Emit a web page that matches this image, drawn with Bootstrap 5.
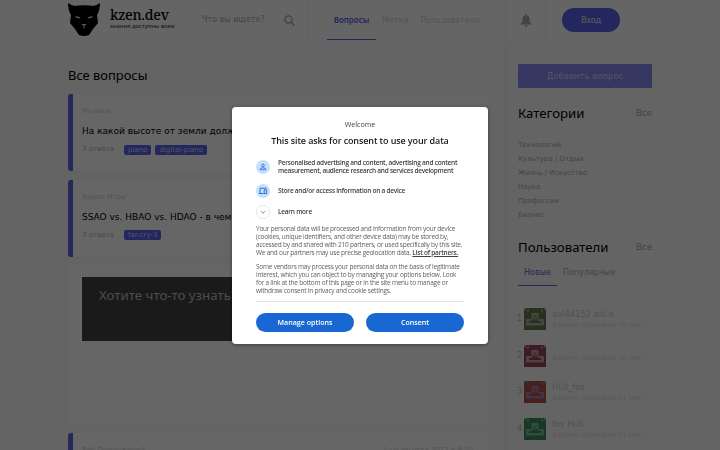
<!DOCTYPE html>
<html lang="ru">
  <head>
    <meta charset="UTF-8" />
    <meta name="viewport" content="width=device-width, initial-scale=1.0" />
    <title>kzen.dev - Все вопросы</title>
    <link href="https://cdn.jsdelivr.net/npm/bootstrap@5.3.3/dist/css/bootstrap.min.css" rel="stylesheet" />
    <style>
      body {
        font-family: "Noto Sans", sans-serif;
        font-size: 8px;
        line-height: 1;
        background-color: #fafafa;
        color: #000;
        width: 720px;
        height: 450px;
        overflow: hidden;
      }
      a { text-decoration: none; color: inherit; }
      .dejavu { font-family: "DejaVu Sans", sans-serif; }

      /* Header */
      .site-header {
        height: 41px;
        padding-left: 68px;
        background-color: #fdfdfd;
        border-bottom: 1px solid #f2f2f5;
        white-space: nowrap;
      }
      .brand { width: 118px; border-right: 1px solid #f5f5f8; }
      .brand-text { margin-left: 10px; padding-top: 7px; }
      .brand-name { font: 500 14.1px/16px "Noto Serif", "DejaVu Serif", serif; letter-spacing: -.3px; }
      .brand-sub { font-size: 5.9px; line-height: 7px; color: #333; }
      .search-box { width: 122px; padding: 0 12px 0 16px; color: #a6a6b2; border-right: 1px solid #f5f5f8; }
      .main-nav { width: 198px; padding-left: 19px; border-right: 1px solid #f0f0f4; color: #d0d0d5; }
      .main-nav a { height: 40px; line-height: 41px; }
      .main-nav .current { width: 49px; margin-right: 6px; text-align: center; color: #5c62df; font-family: "Noto Sans", sans-serif; font-weight: 600; border-bottom: 1px solid #5c62df; line-height: 39px; }
      .bell-box { width: 40px; color: #a9a9b9; border-right: 1px solid #f0f0f4; }
      .btn-login { width: 58px; height: 24px; margin-left: 16px; border-radius: 12px; background-color: #5a62e8; color: #d8d8ec; font-weight: 500; }

      /* Questions */
      .questions { width: 419px; height: 409px; margin-left: 68px; overflow: hidden; }
      .questions h1 { font-size: 12.9px; font-weight: 400; line-height: 20px; margin: 24px 0 9px; }
      .question { height: 77px; margin-bottom: 8.5px; padding: 13px 14px 0 9px; border-left: 5px solid #5c64e4; border-radius: 3px; background-color: #fff; box-shadow: 0 0 4px rgba(0, 0, 0, .035); white-space: nowrap; overflow: hidden; }
      .topic { font-size: 7px; line-height: 9px; color: #d0d0d5; }
      .question h2 { font: 9px/12px "DejaVu Sans", sans-serif; margin: 9px 0 7.5px; }
      .answers { width: 42px; font-size: 7px; color: #b5b5bd; }
      .tag { height: 10px; padding: 0 4px; margin-right: 4px; font-size: 7px; line-height: 10px; border-radius: 2px; background-color: #5a62e8; color: #d5d5f2; }
      .promo { height: 159.5px; margin-bottom: 8px; padding: 12px 14px; background-color: #fff; box-shadow: 0 0 4px rgba(0, 0, 0, .035); }
      .promo-title { height: 64px; padding: 9px 17px; background-color: #424242; color: #bdbdbd; font-size: 13.3px; line-height: 18px; white-space: nowrap; overflow: hidden; }

      /* Sidebar */
      .sidebar { width: 147px; height: 409px; margin-left: 18px; padding: 23px 0 0 12px; border-left: 1px solid #f1f1f4; overflow: hidden; }
      .btn-ask { height: 24px; border-radius: 1px; background-color: #858bf0; color: #d4d4f5; }
      .side-title { font-size: 13.2px; font-weight: 400; line-height: 20px; margin: 0; }
      .show-all { font-size: 9.7px; line-height: 20px; color: #ababb0; }
      .side-head { margin-top: 15px; }
      .categories { font-size: 7px; line-height: 14px; color: #a8a8b5; margin: 15px 0 15px; }
      .user-tabs { height: 17px; margin-top: 12px; line-height: 8px; color: #aaaab2; border-bottom: 1px solid #f6f6f8; }
      .user-tabs .current { width: 39px; margin-right: 6px; color: #6468df; border-bottom: 1px solid #5c62df; text-align: center; height: 17px; }
      .user-list { padding-top: 17px; }
      .user-row { height: 36.6px; padding-top: 5px; white-space: nowrap; border-bottom: 1px solid #f5f5f5; }
      .rank { width: 7px; margin-left: -1px; line-height: 22px; color: #bdbdc4; }
      .user-info { margin-left: 6px; }
      .user-name { height: 12px; font-size: 8.3px; line-height: 12px; color: #cacad0; }
      .joined { font-size: 6.9px; line-height: 10px; color: #dcdce0; }

      /* Consent dialog */
      .shade { background-color: rgba(0, 0, 0, .6); }
      .consent { width: 256px; height: 237px; margin-top: 106.5px; padding: 13.5px 24px 0; font-family: "Open Sans", sans-serif; border-radius: 4px; background-color: #fff; color: #3f4246; box-shadow: 0 1px 4px rgba(0, 0, 0, .4); white-space: nowrap; }
      .welcome { font-size: 7.1px; font-weight: 500; line-height: 8px; }
      .consent h3 { font-size: 9px; letter-spacing: -.11px; line-height: 12px; margin: 7px 0 12px; font-weight: 600; color: #17191c; }
      .purpose { height: 16px; font-size: 6.5px; letter-spacing: -.25px; line-height: 8px; font-weight: 600; gap: 8px; }
      .purpose svg { flex: none; }
      .purpose-more { margin: 5px 0 4.5px; }
      .legal { font-size: 6.5px; letter-spacing: -.23px; line-height: 8px; color: #5f6063; margin: 0 0 6px; }
      .legal a { color: #3f4246; font-weight: 600; text-decoration: underline; }
      .consent-actions { margin-top: 6px; padding-top: 11.5px; gap: 12px; border-top: 1px solid #dfe1e5; }
      .btn-consent { flex: 1; height: 19px; border-radius: 10px; background-color: #1967d2; color: #fff; font-size: 7.1px; font-weight: 600; }
      .btn { --bs-btn-padding-x: 0; --bs-btn-padding-y: 0; --bs-btn-border-width: 0; --bs-btn-line-height: 1; }
      .btn-login, .btn-ask { font-size: 8.5px; }
    </style>
  </head>
  <body>
    <svg class="d-none">
      <symbol id="avatar" viewBox="0 0 22 22">
        <path d="M0 0h2v2H0zM20 0h2v2h-2zM3 1.500h2v2H3zM17 1.500h2v2h-2zM7.500 5h7v6H20v6.500H2V11h5.500zM9.500 7.500V11H8v2H5v2h12v-2h-3v-2h-1.500V7.500z" fill-rule="evenodd" />
        <path d="M9.500 7.500h3V12h-3z" opacity=".55" />
      </symbol>
    </svg>

    <header class="site-header d-flex">
      <a class="brand d-flex" href="#">
        <svg width="32" height="36" viewBox="0 0 32 36">
          <path d="M0 3Q5 7 10 5.500Q16 5 22 5.500Q27 7 32 3Q32 10 29 15L30 23L25 29L21 35Q16 37 11 35L7 29L2 23L3 15Q0 10 0 3Z" fill="#000" />
          <path d="M7 16l4.500 1 1 1.500q-4.500 0-5.500-2.500zM25 16l-4.500 1-1 1.500q4.500 0 5.500-2.500zM13.500 24h5l-2 2v2.500h-1V26z" fill="#dedede" />
        </svg>
        <span class="brand-text">
          <span class="brand-name d-block">kzen.dev</span>
          <span class="brand-sub d-block">знания доступны всем</span>
        </span>
      </a>
      <div class="search-box d-flex align-items-center justify-content-between dejavu">
        <span>Что вы ищете?</span>
        <svg width="11" height="11" viewBox="0 0 11 11" fill="none" stroke="#a0a0a0" stroke-width="1.3"><circle cx="4.5" cy="4.5" r="3.6" /><path d="M7.2 7.2l3.3 3.3" /></svg>
      </div>
      <nav class="main-nav d-flex dejavu">
        <a class="current" href="#">Вопросы</a>
        <a href="#">Метки</a>
        <a class="ms-2 ps-1" href="#">Пользователи</a>
      </nav>
      <div class="bell-box d-flex align-items-center justify-content-center">
        <svg width="12" height="13" viewBox="0 0 12 13" fill="currentColor"><path d="M5.3 0h1.4v1.2Q9.5 2 9.5 5v2.7L11.5 10v.6H.5V10l2-2.3V5q0-3 2.8-3.8zM4.5 11.3h3Q7.3 13 6 13t-1.5-1.7z" /></svg>
      </div>
      <a class="btn btn-login d-flex align-items-center justify-content-center align-self-center" href="#">Вход</a>
    </header>

    <main class="d-flex">
      <section class="questions">
        <h1>Все вопросы</h1>
        <article class="question dejavu">
          <div class="topic">Музыка</div>
          <h2>На какой высоте от земли должно быть пианино?</h2>
          <div class="d-flex align-items-center"><span class="answers">3 ответа</span><span class="tag">piano</span><span class="tag">digital-piano</span></div>
        </article>
        <article class="question dejavu">
          <div class="topic">Видео Игры</div>
          <h2>SSAO vs. HBAO vs. HDAO - в чем разница?</h2>
          <div class="d-flex align-items-center"><span class="answers">3 ответа</span><span class="tag">far-cry-3</span></div>
        </article>
        <div class="promo">
          <div class="promo-title">Хотите что-то узнать?</div>
        </div>
        <article class="question dejavu">
          <div class="topic d-flex justify-content-between"><span>Веб Приложений</span><span>1-го августа 2012 в 9:40</span></div>
        </article>
      </section>

      <aside class="sidebar">
        <a class="btn btn-ask d-flex align-items-center justify-content-center dejavu" href="#">Добавить вопрос</a>
        <div class="side-head d-flex justify-content-between">
          <h2 class="side-title">Категории</h2><a class="show-all" href="#">Все</a>
        </div>
        <ul class="categories list-unstyled dejavu">
          <li>Технологий</li>
          <li>Культура / Отдых</li>
          <li>Жизнь / Искусство</li>
          <li>Наука</li>
          <li>Профессии</li>
          <li>Бизнес</li>
        </ul>
        <div class="d-flex justify-content-between">
          <h2 class="side-title">Пользователи</h2><a class="show-all" href="#">Все</a>
        </div>
        <div class="user-tabs d-flex dejavu">
          <a class="current" href="#">Новые</a><a href="#">Популярные</a>
        </div>
        <div class="user-list dejavu">
          <div class="user-row d-flex">
            <span class="rank">1</span>
            <svg width="22" height="22" fill="#a5b49a"><rect width="22" height="22" fill="#6a7550" /><use href="#avatar" /></svg>
            <div class="user-info"><div class="user-name">aol44152 aol o</div><div class="joined">Зарегистрирован 10 мес.</div></div>
          </div>
          <div class="user-row d-flex">
            <span class="rank">2</span>
            <svg width="22" height="22" fill="#c4a0a8"><rect width="22" height="22" fill="#984558" /><use href="#avatar" /></svg>
            <div class="user-info pt-1 mt-1"><div class="joined">Зарегистрирован 10 мес.</div></div>
          </div>
          <div class="user-row d-flex">
            <span class="rank">3</span>
            <svg width="22" height="22" fill="#a480b0"><rect width="22" height="22" fill="#ae5048" /><use href="#avatar" /></svg>
            <div class="user-info"><div class="user-name">Hull_fox</div><div class="joined">Зарегистрирован 11 мес.</div></div>
          </div>
          <div class="user-row d-flex">
            <span class="rank">4</span>
            <svg width="22" height="22" fill="#80c098"><rect width="22" height="22" fill="#3c8c5a" /><use href="#avatar" /></svg>
            <div class="user-info"><div class="user-name">fox Hull</div><div class="joined">Зарегистрирован 11 мес.</div></div>
          </div>
        </div>
      </aside>
    </main>

    <div class="shade position-fixed top-0 start-0 w-100 h-100 d-flex justify-content-center align-items-start">
      <div class="consent" role="dialog">
        <div class="welcome text-center">Welcome</div>
        <h3 class="text-center">This site asks for consent to use your data</h3>
        <div class="purpose d-flex align-items-center">
          <svg width="14" height="14" viewBox="0 0 14 14"><circle cx="7" cy="7" r="7" fill="#c5dffc" /><g fill="none" stroke="#1967d2" stroke-width=".8"><circle cx="7" cy="5.4" r="1.3" /><path d="M4.1 9.7V9Q4.3 7.9 7 7.8Q9.7 7.9 9.9 9v.7z" /></g></svg>
          <span>Personalised advertising and content, advertising and content<br />measurement, audience research and services development</span>
        </div>
        <div class="purpose d-flex align-items-center mt-2">
          <svg width="14" height="14" viewBox="0 0 14 14"><circle cx="7" cy="7" r="7" fill="#c5dffc" /><g fill="none" stroke="#1967d2" stroke-width=".9"><path d="M10.5 4.2H4.1v5M3 9.500h4.500M8.200 5.800h2.500v3.800H8.200z" /></g></svg>
          <span>Store and/or access information on a device</span>
        </div>
        <div class="purpose purpose-more d-flex align-items-center">
          <svg width="14" height="14" viewBox="0 0 14 14" fill="none"><circle cx="7" cy="7" r="6.6" stroke="#dadce0" stroke-width=".7" /><path d="M5 6.2l2 2 2-2" stroke="#5f6368" stroke-width=".8" /></svg>
          <span>Learn more</span>
        </div>
        <p class="legal">Your personal data will be processed and information from your device<br />(cookies, unique identifiers, and other device data) may be stored by,<br />accessed by and shared with 210 partners, or used specifically by this site.<br />We and our partners may use precise geolocation data. <a href="#">List of partners.</a></p>
        <p class="legal">Some vendors may process your personal data on the basis of legitimate<br />interest, which you can object to by managing your options below. Look<br />for a link at the bottom of this page or in the site menu to manage or<br />withdraw consent in privacy and cookie settings.</p>
        <div class="consent-actions d-flex">
          <button class="btn btn-consent">Manage options</button>
          <button class="btn btn-consent">Consent</button>
        </div>
      </div>
    </div>
    <script src="https://cdn.jsdelivr.net/npm/bootstrap@5.3.3/dist/js/bootstrap.bundle.min.js"></script>
  </body>
</html>
